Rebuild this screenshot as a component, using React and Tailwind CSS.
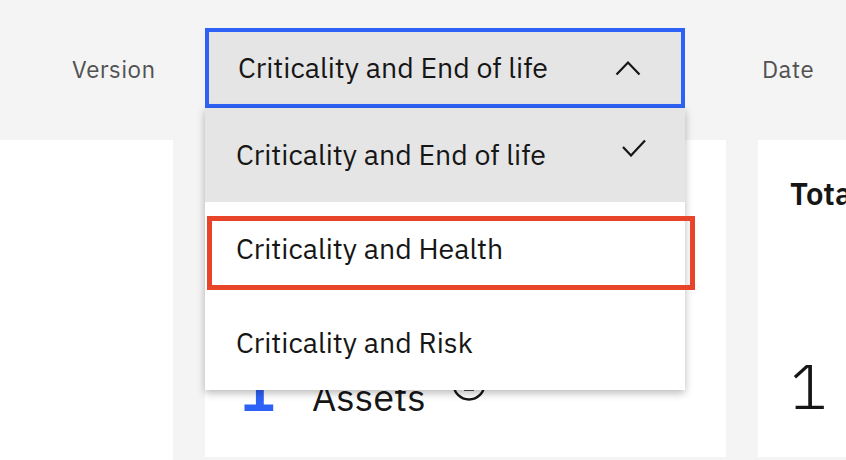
import React from 'react'

const font = { fontFamily: '"IBM Plex Sans", "Noto Sans", "Open Sans", sans-serif' }

function ChevronUp() {
  return (
    <svg width="26" height="16" viewBox="0 0 26 16" fill="none">
      <path d="M1.5 14.5L13 2.5l11.5 12" stroke="#161616" strokeWidth="2.2" />
    </svg>
  )
}

function Check() {
  return (
    <svg width="24" height="18" viewBox="0 0 24 18" fill="none">
      <path d="M1 8l8 8.5L23 1.5" stroke="#161616" strokeWidth="2.2" />
    </svg>
  )
}

function InfoIcon() {
  return (
    <svg width="36" height="36" viewBox="0 0 36 36" fill="none">
      <circle cx="18" cy="18" r="15.5" stroke="#161616" strokeWidth="2.4" />
      <path d="M18 15v8M13 23.5h10" stroke="#161616" strokeWidth="2.4" />
      <circle cx="18" cy="10.5" r="1.8" fill="#161616" />
    </svg>
  )
}

const options = ['Criticality and End of life', 'Criticality and Health', 'Criticality and Risk']

export default function App() {
  const selected = options[0]
  return (
    <div style={font} className="w-[846px] h-[460px] overflow-hidden bg-[#f4f4f4] text-[#161616]">
      <div className="h-[140px] flex items-start pt-[28px]">
        <div className="w-[205px] shrink-0 h-[80px] flex items-center pl-[72px] pt-[2px] text-[24px] text-[#525252] tracking-[0.4px]">
          Version
        </div>
        <div className="relative w-[480px] shrink-0 z-10">
          <button
            type="button"
            className="w-full h-[80px] border-4 border-[#2e62f6] bg-[#e5e5e5] flex items-center justify-between pl-[29px] pr-[40px] text-[28.5px] text-left"
          >
            <span>{selected}</span>
            <ChevronUp />
          </button>
          <div className="absolute left-0 top-[80px] w-full bg-white shadow-[0_3px_8px_rgba(0,0,0,0.28)]">
            {options.map((o, i) => (
              <div
                key={o}
                className={
                  'relative h-[94px] flex items-center justify-between pl-[31px] pr-[39px] text-[28.5px] ' +
                  (o === selected ? 'bg-[#e5e5e5]' : 'bg-white')
                }
              >
                <span>{o}</span>
                {o === selected && (
                  <span className="mb-[14px]">
                    <Check />
                  </span>
                )}
                {i === 1 && (
                  <div className="absolute left-[2px] top-[14px] w-[488px] h-[74px] border-[5px] border-[#e8442a]" />
                )}
              </div>
            ))}
          </div>
        </div>
        <div className="h-[80px] flex items-center pl-[77px] pt-[2px] text-[24px] text-[#525252] tracking-[0.4px]">
          Date
        </div>
      </div>

      <div className="flex h-[320px]">
        <div className="w-[173px] shrink-0 bg-white" />
        <div className="ml-[32px] w-[521px] shrink-0 h-[317px] bg-white pl-[34px] pt-[216px]">
          <div className="flex items-end">
            <span className="text-[60px] leading-none font-semibold text-[#2e62f6] translate-y-[3px] mr-[37px]">1</span>
            <span className="text-[38px] leading-none">Assets</span>
            <span className="self-start mt-[10px] ml-[25px]">
              <InfoIcon />
            </span>
          </div>
        </div>
        <div className="ml-[32px] flex-1 min-w-0 overflow-hidden h-[317px] bg-white pl-[32px] pt-[38px]">
          <div className="text-[31px] font-semibold leading-none whitespace-nowrap">Total assets</div>
          <div className="mt-[146px] text-[62px] font-light leading-none">1</div>
        </div>
      </div>
    </div>
  )
}
